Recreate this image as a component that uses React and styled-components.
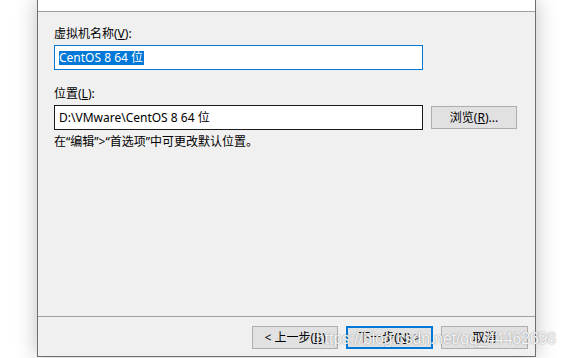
import styled, { createGlobalStyle } from "styled-components";

const GlobalStyle = createGlobalStyle`
  html, body {
    margin: 0;
    padding: 0;
    background: #ffffff;
  }
  * {
    box-sizing: border-box;
  }
`

const Page = styled.div`
  position: relative;
  width: 566px;
  height: 358px;
  overflow: hidden;
  background: #ffffff;
  font-family: 'Noto Sans', 'Noto Sans CJK SC', sans-serif;
  font-size: 12px;
  color: #000000;
`

const Window = styled.div`
  margin-left: 37px;
  width: 499px;
  height: 357px;
  display: flex;
  flex-direction: column;
  border: 1px solid #6f6f6f;
  border-top: none;
  background: #f0f0f0;
  box-shadow: 0 0 20px rgba(0, 0, 0, 0.25);
`

const Header = styled.div`
  height: 12px;
  background: #ffffff;
  border-bottom: 1px solid #a0a0a0;
`

const Body = styled.div`
  flex: 1;
  display: flex;
  flex-direction: column;
  padding: 14px 0 0 16px;
`

const Label = styled.div`
  height: 16px;
  line-height: 16px;
  margin-top: ${(p) => p.$gap || 0}px;
`

const Row = styled.div`
  display: flex;
  align-items: center;
  margin-top: 3px;
`

const TextBox = styled.div`
  width: 369px;
  height: 25px;
  display: flex;
  align-items: center;
  padding-left: 4px;
  background: #ffffff;
  border: 1px solid ${(p) => (p.$focused ? '#0078d7' : '#1a1a1a')};
  line-height: 14px;
  white-space: nowrap;
`

const Selected = styled.span`
  background: #0078d7;
  color: #ffffff;
  height: 14px;
  line-height: 14px;
  padding-right: 1px;
`

const Button = styled.button`
  width: ${(p) => p.$width || 86}px;
  height: 23px;
  margin-left: ${(p) => p.$ml || 0}px;
  padding: 0;
  font-family: inherit;
  font-size: 12px;
  line-height: 14px;
  color: #000000;
  background: #e1e1e1;
  border: ${(p) => (p.$default ? '2px solid #0078d7' : '1px solid #adadad')};
  display: flex;
  align-items: center;
  justify-content: center;
  white-space: nowrap;
`

const Hint = styled.div`
  margin-top: 4px;
  line-height: 16px;
`

const Footer = styled.div`
  display: flex;
  justify-content: flex-end;
  gap: 8px;
  padding: 9px 7px 7px 0;
  border-top: 1px solid #a0a0a0;
`

/* csdn watermark pasted over the bottom of the shot */
const Watermark = styled.div`
  position: absolute;
  left: 316px;
  top: 329px;
  font-family: 'Liberation Sans', Arial, sans-serif;
  font-size: 17px;
  line-height: 20px;
  color: rgba(255, 255, 255, 0.92);
  text-shadow: 0 0 1px rgba(90, 90, 90, 0.55), 0 0 2px rgba(120, 120, 120, 0.35);
  transform: scaleX(0.92);
  transform-origin: left top;
  pointer-events: none;
  white-space: nowrap;
`

export default function App() {
  return (
    <>
      <GlobalStyle />
      <Page>
        <Window>
          <Header />
          <Body>
            <Label>虚拟机名称(<u>V</u>):</Label>
            <Row>
              <TextBox $focused>
                <Selected>CentOS 8 64 位</Selected>
              </TextBox>
            </Row>
            <Label $gap={16}>位置(<u>L</u>):</Label>
            <Row>
              <TextBox>D:\VMware\CentOS 8 64 位</TextBox>
              <Button $ml={8}>浏览(<u>R</u>)...</Button>
            </Row>
            <Hint>在“编辑”&gt;“首选项”中可更改默认位置。</Hint>
          </Body>
          <Footer>
            <Button>&lt; 上一步(<u>B</u>)</Button>
            <Button $default $width={87}>下一步(<u>N</u>) &gt;</Button>
            <Button $width={87}>取消</Button>
          </Footer>
        </Window>
        <Watermark>https://blog.csdn.net/qq_44462698</Watermark>
      </Page>
    </>
  )
}
